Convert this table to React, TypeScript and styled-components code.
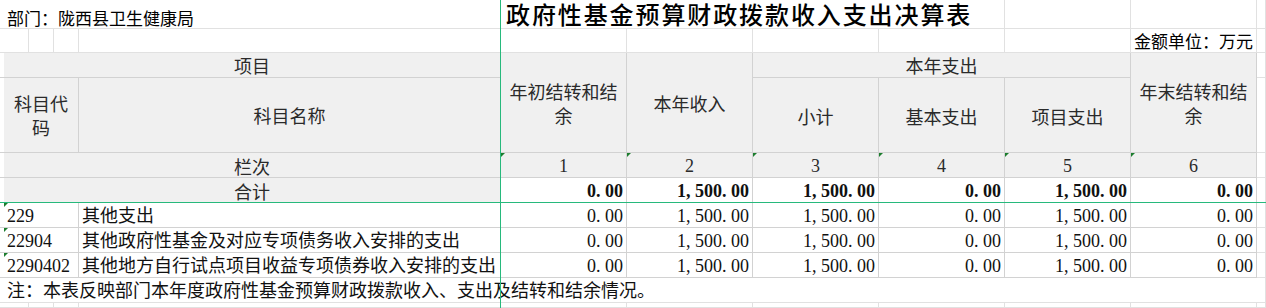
import React from 'react';
import styled, { createGlobalStyle, css } from 'styled-components';

const SANS = `"Noto Sans CJK SC", "Liberation Sans", sans-serif`;
const SERIF = `"Liberation Serif", "Noto Sans CJK SC", serif`;

const GRID = '#e1e1e1';
const TABLE = '#d2d2d2';
const HEAD_BG = '#f0f0f0';
const FREEZE = '#27b97c';

const GlobalStyle = createGlobalStyle`
  html, body {
    margin: 0;
    padding: 0;
    background: #fff;
  }
  body {
    overflow: hidden;
  }
`;

const Sheet = styled.div`
  position: relative;
  display: grid;
  grid-template-columns: 4px 25px 25px 25px 422px repeat(6, 126px) 1fr;
  grid-template-rows: 29px 24px 25px 75px repeat(6, 25px) 1fr;
  width: 1266px;
  height: 308px;
  overflow: hidden;
  background: #fff;
`;

type CellProps = {
  $c: string;
  $r: string;
  $head?: boolean;
  $table?: boolean;
  $align?: 'left' | 'center' | 'right';
  $valign?: 'center' | 'end';
  $serif?: boolean;
  $size?: number;
  $bold?: boolean;
  $flag?: boolean;
  $wrap?: boolean;
  $pad?: number;
  $low?: boolean;
};

const justify = { left: 'flex-start', center: 'center', right: 'flex-end' };

const Cell = styled.div<CellProps>`
  position: relative;
  grid-column: ${p => p.$c};
  grid-row: ${p => p.$r};
  box-sizing: border-box;
  display: flex;
  align-items: ${p => (p.$valign === 'end' ? 'flex-end' : 'center')};
  justify-content: ${p => justify[p.$align || 'left']};
  text-align: ${p => p.$align || 'left'};
  padding: ${p => (p.$low ? '2px' : '0')} ${p => p.$pad ?? 3}px 0;
  border-right: 1px solid ${p => (p.$table || p.$head ? TABLE : GRID)};
  border-bottom: 1px solid ${p => (p.$table || p.$head ? TABLE : GRID)};
  background: ${p => (p.$head ? HEAD_BG : '#fff')};
  color: ${p => (p.$head ? '#2a2a2a' : '#111')};
  font-family: ${p => (p.$serif ? SERIF : SANS)};
  font-size: ${p => p.$size ?? 18}px;
  font-weight: ${p => (p.$bold ? 700 : 400)};
  line-height: 22px;
  white-space: ${p => (p.$wrap ? 'normal' : 'nowrap')};
  overflow: visible;

  ${p =>
    p.$flag &&
    css`
      &::before {
        content: '';
        position: absolute;
        top: 0;
        left: 0;
        border-top: 4px solid #1c7d2e;
        border-right: 4px solid transparent;
      }
    `}
`;

const HeadWrap = styled(Cell)`
  line-height: 24px;
`;

const DeptCell = styled(Cell)`
  padding-left: 7px;
  padding-bottom: 0;
  line-height: 20px;
  color: #000;
`;

const TitleCell = styled(Cell)`
  font-size: 24px;
  font-weight: 500;
  letter-spacing: 1.9px;
  color: #000;
  line-height: 28px;
  padding-left: 5px;
`;

const UnitCell = styled(Cell)`
  line-height: 20px;
  padding-bottom: 1px;
  color: #000;
`;

const NoteCell = styled(Cell)`
  padding-left: 7px;
  padding-top: 2px;
`;

const Punct = styled.span`
  display: inline-block;
  width: 9px;
  text-align: left;
`;

const FreezeV = styled.div`
  position: absolute;
  left: 500px;
  top: 0;
  bottom: 0;
  width: 1px;
  background: ${FREEZE};
`;

const FreezeH = styled.div`
  position: absolute;
  top: 202px;
  left: 0;
  right: 0;
  height: 1px;
  background: ${FREEZE};
`;

const Num: React.FC<{ value: string }> = ({ value }) => (
  <>
    {value.split('').map((ch, i) =>
      ch === ',' || ch === '.' ? <Punct key={i}>{ch}</Punct> : <React.Fragment key={i}>{ch}</React.Fragment>
    )}
  </>
);

const col = (n: number) => `${n} / ${n + 1}`;
const row = (n: number) => `${n} / ${n + 1}`;

const totals = ['0.00', '1,500.00', '1,500.00', '0.00', '1,500.00', '0.00'];

const items = [
  { code: '229', name: '其他支出', values: totals },
  { code: '22904', name: '其他政府性基金及对应专项债务收入安排的支出', values: totals },
  { code: '2290402', name: '其他地方自行试点项目收益专项债券收入安排的支出', values: totals },
];

const App: React.FC = () => {
  return (
    <>
      <GlobalStyle />
      <Sheet>
        {/* row 1: department + title */}
        <DeptCell $c="1 / 6" $r={row(1)} $valign="end" $size={17}>
          部门：陇西县卫生健康局
        </DeptCell>
        <TitleCell $c="6 / 10" $r={row(1)}>
          政府性基金预算财政拨款收入支出决算表
        </TitleCell>
        <Cell $c={col(10)} $r={row(1)} />
        <Cell $c={col(11)} $r={row(1)} />
        <Cell $c={col(12)} $r={row(1)} />

        {/* row 2: unit */}
        {[1, 2, 3, 4, 5, 6, 7, 8, 9, 10].map(n => (
          <Cell key={n} $c={col(n)} $r={row(2)} />
        ))}
        <UnitCell $c={col(11)} $r={row(2)} $align="right" $valign="end" $size={17}>
          金额单位：万元
        </UnitCell>
        <Cell $c={col(12)} $r={row(2)} />

        {/* header */}
        {[3, 4, 5, 6, 7, 8, 9, 10].map(n => (
          <Cell key={n} $c={col(1)} $r={row(n)} $table />
        ))}
        <Cell $c="2 / 6" $r={row(3)} $head $align="center">项目</Cell>
        <HeadWrap $c={col(6)} $r="3 / 5" $head $align="center" $wrap $pad={0}>年初结转和结余</HeadWrap>
        <Cell $c={col(7)} $r="3 / 5" $head $align="center">本年收入</Cell>
        <Cell $c="8 / 11" $r={row(3)} $head $align="center">本年支出</Cell>
        <HeadWrap $c={col(11)} $r="3 / 5" $head $align="center" $wrap $pad={0}>年末结转和结余</HeadWrap>
        <HeadWrap $c="2 / 5" $r={row(4)} $head $align="center" $wrap $pad={9}>科目代码</HeadWrap>
        <Cell $c={col(5)} $r={row(4)} $head $align="center">科目名称</Cell>
        <Cell $c={col(8)} $r={row(4)} $head $align="center" $low>小计</Cell>
        <Cell $c={col(9)} $r={row(4)} $head $align="center" $low>基本支出</Cell>
        <Cell $c={col(10)} $r={row(4)} $head $align="center" $low>项目支出</Cell>

        {/* row 5: column numbers */}
        <Cell $c="2 / 6" $r={row(5)} $head $align="center" $low>栏次</Cell>
        {[1, 2, 3, 4, 5, 6].map(n => (
          <Cell key={n} $c={col(5 + n)} $r={row(5)} $head $align="center" $serif $flag $low>
            {n}
          </Cell>
        ))}

        {/* row 6: totals */}
        <Cell $c="2 / 6" $r={row(6)} $head $align="center" $low>合计</Cell>
        {totals.map((v, i) => (
          <Cell key={i} $c={col(6 + i)} $r={row(6)} $table $align="right" $serif $bold $low>
            <Num value={v} />
          </Cell>
        ))}

        {/* data rows */}
        {items.map((item, r) => (
          <React.Fragment key={item.code}>
            <Cell $c="2 / 5" $r={row(7 + r)} $table $serif $flag $low>
              {item.code}
            </Cell>
            <Cell $c={col(5)} $r={row(7 + r)} $table $serif $low>
              {item.name}
            </Cell>
            {item.values.map((v, i) => (
              <Cell key={i} $c={col(6 + i)} $r={row(7 + r)} $table $align="right" $serif $low>
                <Num value={v} />
              </Cell>
            ))}
          </React.Fragment>
        ))}

        {[3, 4, 5, 6, 7, 8, 9, 10].map(n => (
          <Cell key={`e${n}`} $c={col(12)} $r={row(n)} />
        ))}

        {/* note */}
        <NoteCell $c="1 / 13" $r={row(10)} $serif>
          注：本表反映部门本年度政府性基金预算财政拨款收入、支出及结转和结余情况。
        </NoteCell>

        {[1, 2, 3, 4, 5, 6, 7, 8, 9, 10, 11, 12].map(n => (
          <Cell key={`b${n}`} $c={col(n)} $r={row(11)} />
        ))}

        <FreezeV />
        <FreezeH />
      </Sheet>
    </>
  );
};

export default App;
